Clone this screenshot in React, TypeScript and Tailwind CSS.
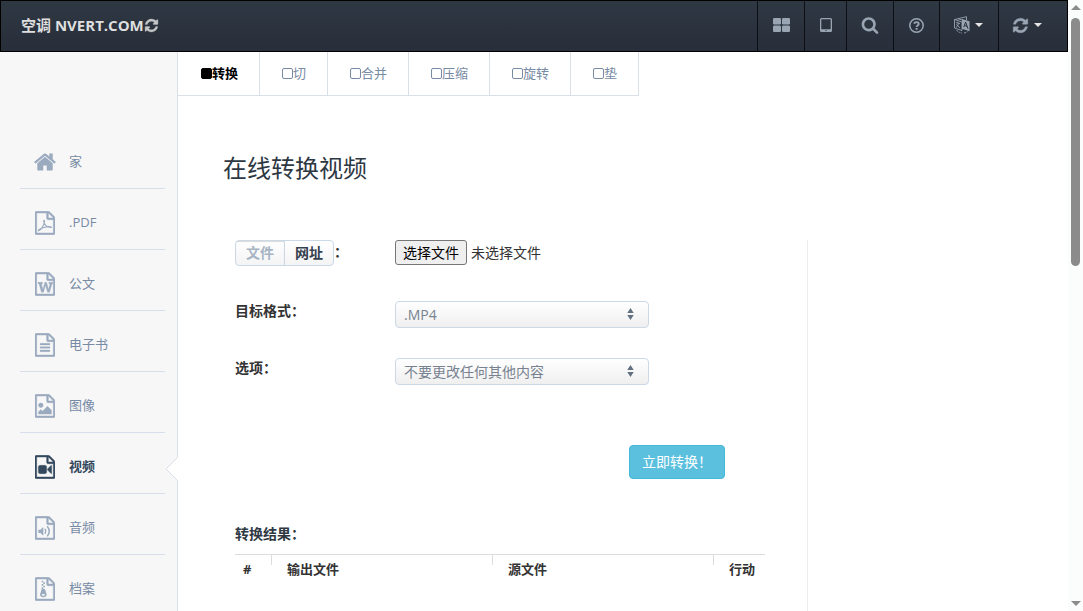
import type { ReactNode } from "react";

const FILE_OUTLINE =
  "M1468 380q28 28 48 76t20 88v1152q0 40-28 68t-68 28h-1344q-40 0-68-28t-28-68v-1600q0-40 28-68t68-28h896q40 0 88 20t76 48zm-444-244v376h376q-10-29-22-41l-313-313q-12-12-41-22zm384 1528v-1024h-416q-40 0-68-28t-28-68v-416h-768v1536h1280z";

const REFRESH =
  "M1639 1056q0 5-1 7-64 268-268 434.5t-478 166.5q-146 0-282.5-55t-243.5-157l-129 129q-19 19-45 19t-45-19-19-45v-448q0-26 19-45t45-19h448q26 0 45 19t19 45-19 45l-137 137q71 66 161 102t187 36q134 0 250-65t186-179q11-17 53-117 8-23 30-23h192q13 0 22.5 9.5t9.5 22.5zm25-800v448q0 26-19 45t-45 19h-448q-26 0-45-19t-19-45 19-45l138-138q-148-137-349-137-134 0-250 65t-186 179q-11 17-53 117-8 23-30 23h-199q-13 0-22.5-9.5t-9.5-22.5v-7q65-268 270-434.5t480-166.5q146 0 284 55.5t245 156.5l130-129q19-19 45-19t45 19 19 45z";

function FileIcon({ children }: { children: ReactNode }) {
  return (
    <svg viewBox="0 0 1536 1792" className="h-6 w-5" fill="currentColor" aria-hidden="true">
      <path d={FILE_OUTLINE} stroke="currentColor" strokeWidth="36" />
      {children}
    </svg>
  );
}

function RefreshIcon({ className }: { className: string }) {
  return (
    <svg viewBox="0 0 1792 1792" className={className} fill="currentColor" aria-hidden="true">
      <path d={REFRESH} stroke="currentColor" strokeWidth="40" />
    </svg>
  );
}

function HomeIcon() {
  return (
    <svg viewBox="0 0 1792 1792" className="h-6 w-6 shrink-0" fill="currentColor" aria-hidden="true">
      <path d="M1472 992v480q0 26-19 45t-45 19h-384v-384h-256v384h-384q-26 0-45-19t-19-45v-480q0-1 .5-3t.5-3l575-474 575 474q1 2 1 6zm223-69l-62 74q-8 9-21 11h-3q-13 0-21-7l-692-577-692 577q-12 8-24 7-13-2-21-11l-62-74q-8-10-7-23.5t11-21.5l719-599q32-26 76-26t76 26l244 204v-195q0-14 9-23t23-9h192q14 0 23 9t9 23v408l219 182q10 8 11 21.5t-7 23.5z" />
    </svg>
  );
}

function PdfIcon() {
  return (
    <FileIcon>
      <path
        d="M270 1495C460 1440 700 1090 730 760C735 660 660 660 665 760C690 1010 900 1260 1250 1245C1290 1200 1150 1160 960 1180C700 1210 480 1270 350 1370C250 1440 240 1500 270 1495Z"
        fill="none"
        stroke="currentColor"
        strokeWidth="85"
      />
    </FileIcon>
  );
}

function WordIcon() {
  return (
    <FileIcon>
      <path
        d="M233 768h350v107h-90l115 438 150-545h130l150 545 115-438h-90v-107h320v107h-75l-190 661h-155l-145-500-10-60-10 60-150 500h-155l-185-661h-75z"
        stroke="currentColor"
        strokeWidth="24"
      />
    </FileIcon>
  );
}

function BookIcon() {
  return (
    <FileIcon>
      <path
        d="M384 800q0-32 32-32h704q32 0 32 32v64q0 32-32 32h-704q-32 0-32-32zM384 1056q0-32 32-32h704q32 0 32 32v64q0 32-32 32h-704q-32 0-32-32zM384 1312q0-32 32-32h704q32 0 32 32v64q0 32-32 32h-704q-32 0-32-32z"
        stroke="currentColor"
        strokeWidth="24"
      />
    </FileIcon>
  );
}

function ImageIcon() {
  return (
    <FileIcon>
      <path d="M1280 1216v320h-1024v-192l192-192 128 128 384-384zM448 1024q-80 0-136-56t-56-136 56-136 136-56 136 56 56 136-56 136-136 56z" />
    </FileIcon>
  );
}

function VideoIcon() {
  return (
    <FileIcon>
      <path
        d="M768 768q52 0 90 38t38 90v384q0 52-38 90t-90 38h-384q-52 0-90-38t-38-90v-384q0-52 38-90t90-38zM1260 770q20 8 20 30v576q0 22-20 30-8 2-12 2-14 0-23-9l-265-266v-90l265-266q9-9 23-9 4 0 12 2z"
        stroke="currentColor"
        strokeWidth="24"
      />
    </FileIcon>
  );
}

function AudioIcon() {
  return (
    <FileIcon>
      <path d="M620 850q20 8 20 30v544q0 22-20 30-8 2-12 2-12 0-23-9l-166-167h-131q-14 0-23-9t-9-23v-192q0-14 9-23t23-9h131l166-167q16-15 35-7z" />
      <path d="M780 1000Q890 1150 780 1300M960 800Q1240 1150 960 1500" fill="none" stroke="currentColor" strokeWidth="110" strokeLinecap="round" />
    </FileIcon>
  );
}

function ArchiveIcon() {
  return (
    <FileIcon>
      <path d="M640 256v128h-128v-128zM768 384v128h-128v-128zM640 512v128h-128v-128zM768 640v128h-128v-128z" />
      <path
        fillRule="evenodd"
        d="M781 943l107 349q8 27 8 52 0 83-72.5 137.5t-183.5 54.5-183.5-54.5-72.5-137.5q0-25 8-52 21-63 120-396v-128h128v128h79q22 0 39 13t23 34zM640 1408q53 0 90.500-19t37.500-45-37.500-45-90.500-19-90.500 19-37.500 45 37.500 45 90.500 19z"
      />
    </FileIcon>
  );
}

function GridIcon() {
  return (
    <svg viewBox="0 0 17 14" className="h-[14px] w-[17px]" fill="currentColor" aria-hidden="true">
      <rect x="0" y="0" width="8" height="6.500" rx="1.200" />
      <rect x="9" y="0" width="8" height="6.500" rx="1.200" />
      <rect x="0" y="7.500" width="8" height="6.500" rx="1.200" />
      <rect x="9" y="7.500" width="8" height="6.500" rx="1.200" />
    </svg>
  );
}

function TabletIcon() {
  return (
    <svg viewBox="0 0 12 14" className="h-[14px] w-3" fill="currentColor" aria-hidden="true">
      <path
        fillRule="evenodd"
        d="M1.500 0h9A1.500 1.500 0 0 1 12 1.500v11a1.500 1.500 0 0 1-1.500 1.500h-9A1.500 1.500 0 0 1 0 12.500v-11A1.500 1.500 0 0 1 1.500 0zM1.300 1.300v10h9.400v-10zM6 12a.6.6 0 1 0 0 1.200.6.6 0 0 0 0-1.200z"
      />
    </svg>
  );
}

function SearchIcon() {
  return (
    <svg viewBox="0 0 1792 1792" className="h-[18px] w-[18px]" fill="currentColor" aria-hidden="true">
      <path d="M1216 832q0-185-131.5-316.5t-316.5-131.5-316.5 131.5-131.5 316.5 131.5 316.5 316.5 131.5 316.5-131.5 131.5-316.5zm512 832q0 52-38 90t-90 38q-54 0-90-38l-343-342q-179 124-399 124-143 0-273.5-55.5t-225-150-150-225-55.5-273.5 55.5-273.5 150-225 225-150 273.5-55.5 273.5 55.5 225 150 150 225 55.5 273.5q0 220-124 399l343 343q37 37 37 90z" />
    </svg>
  );
}

function HelpIcon() {
  return (
    <svg viewBox="0 0 15 15" className="h-[15px] w-[15px]" fill="none" stroke="currentColor" aria-hidden="true">
      <circle cx="7.500" cy="7.500" r="6.700" strokeWidth="1.500" />
      <path d="M5.200 5.700C5.600 3.600 9.700 3.500 9.700 6C9.700 7.500 7.600 7.400 7.600 9.100" strokeWidth="1.900" />
      <path d="M7.600 10v1.800" strokeWidth="2" />
    </svg>
  );
}

function LanguageIcon() {
  return (
    <svg viewBox="0 0 16 18" className="h-[18px] w-4" fill="none" stroke="currentColor" aria-hidden="true">
      <path d="M.5 3.500L8 6v8.500L.5 12zM.8 3.500L12.500.7v3.500M4 2.700L9.500 4.500" strokeWidth="0.900" />
      <path d="M8 3l7.500 2.200v10L8 12.700z" fill="currentColor" stroke="none" />
      <path d="M9.800 11.200l1.800-5.200 2.400 6.800M10.400 9.500l2.900.9" stroke="#2b333f" strokeWidth="1" />
      <path d="M2 6.500l4 1.200M4.700 7.300q-.5 2.700-2.700 4M2.500 8.300q1.200 2.200 3.500 3.400M4 5.700v1.200" strokeWidth="0.900" />
      <path d="M2.500 14q2 2.600 5.500 3M10 17q2.500-.3 3.500-1.500" strokeWidth="0.900" strokeDasharray="2 0.800" />
    </svg>
  );
}

function Caret() {
  return <span className="ml-[5px] h-0 w-0 border-x-4 border-t-4 border-x-transparent border-t-[#e6e6e6]" />;
}

function NavButton({ label, className, children }: { label: string; className: string; children: ReactNode }) {
  return (
    <button
      type="button"
      aria-label={label}
      className={`flex items-center justify-center border-l border-black/70 pb-0.5 text-[#9aa5b3] ${className}`}
    >
      {children}
    </button>
  );
}

function Header() {
  return (
    <header className="flex h-[52px] shrink-0 items-stretch border border-black bg-linear-to-b from-[#2e3843] to-[#282e3a]">
      <a href="#" className="flex items-center pb-0.5 pl-5 text-[15px] font-bold text-[#dfdfdf]">
        空调 NVERT.COM
        <RefreshIcon className="h-[15px] w-[15px] text-[#c4c6c8]" />
      </a>
      <nav className="ml-auto flex">
        <NavButton label="应用" className="w-[47px]"><GridIcon /></NavButton>
        <NavButton label="设备" className="w-[42px]"><TabletIcon /></NavButton>
        <NavButton label="搜索" className="w-[47px]"><SearchIcon /></NavButton>
        <NavButton label="帮助" className="w-[46px]"><HelpIcon /></NavButton>
        <NavButton label="语言" className="w-[59px] pr-0.5"><LanguageIcon /><Caret /></NavButton>
        <NavButton label="转换" className="w-[69px] pr-3"><RefreshIcon className="h-[17px] w-[17px]" /><Caret /></NavButton>
      </nav>
    </header>
  );
}

const sections = [
  { label: "家", icon: <HomeIcon />, active: false },
  { label: ".PDF", icon: <PdfIcon />, active: false },
  { label: "公文", icon: <WordIcon />, active: false },
  { label: "电子书", icon: <BookIcon />, active: false },
  { label: "图像", icon: <ImageIcon />, active: false },
  { label: "视频", icon: <VideoIcon />, active: true },
  { label: "音频", icon: <AudioIcon />, active: false },
  { label: "档案", icon: <ArchiveIcon />, active: false },
];

function Sidebar() {
  return (
    <aside className="w-[178px] shrink-0 border-r border-[#d9e0e7] bg-[#f7f7f7] pt-[76px]">
      <ul className="pr-3 pl-5">
        {sections.map((s) => (
          <li key={s.label} className="relative h-[61px] border-b border-[#d7dfea]">
            <a
              href="#"
              className={`flex h-full items-center pt-2 text-[13px] ${
                s.active ? "font-bold text-[#34495e]" : "text-[#778ba5]"
              }`}
            >
              <span className={`flex w-[49px] justify-center ${s.active ? "" : "text-[#9aaabf]"}`}>{s.icon}</span>
              {s.label}
            </a>
            {s.active && (
              <svg viewBox="0 0 13 24" className="absolute top-6 -right-[13px] h-6 w-[13px]" aria-hidden="true">
                <path d="M13 .5L12.500 .5L1 12L12.500 23.500H13Z" fill="#fff" />
                <path d="M12.500 .5L1 12L12.500 23.500" fill="none" stroke="#d9e0e7" />
              </svg>
            )}
          </li>
        ))}
      </ul>
    </aside>
  );
}

const tabs = [
  { label: "转换", active: true },
  { label: "切", active: false },
  { label: "合并", active: false },
  { label: "压缩", active: false },
  { label: "旋转", active: false },
  { label: "垫", active: false },
];

function Tabs() {
  return (
    <nav className="flex w-fit border-b border-[#d9e0e7] pl-px">
      {tabs.map((t) => (
        <a
          key={t.label}
          href="#"
          className={`flex h-[43px] items-center border-r border-[#d9e0e7] px-[21px] text-[13px] ${
            t.active ? "font-bold text-black" : "text-[#778ba5]"
          }`}
        >
          <svg viewBox="0 0 12 12" className="h-3 w-3" stroke="currentColor" aria-hidden="true">
            <rect x="1.500" y="0.500" width="10" height="10" rx="1.500" fill={t.active ? "currentColor" : "none"} />
          </svg>
          {t.label}
        </a>
      ))}
    </nav>
  );
}

function Select({ id, value }: { id: string; value: string }) {
  return (
    <div className="relative w-[254px]">
      <select
        id={id}
        className="block h-[27px] w-full appearance-none rounded border border-[#cbd9e6] bg-linear-to-b from-white to-[#efefef] px-2 text-[14px] text-[#788290]"
      >
        <option>{value}</option>
      </select>
      <svg viewBox="0 0 7 13" className="pointer-events-none absolute top-[7px] right-[15px] h-3 w-[7px] fill-[#637080]" aria-hidden="true">
        <path d="M3.500 0L7 5.500H0zM3.500 13L0 7.500H7z" />
      </svg>
    </div>
  );
}

function Converter() {
  return (
    <form className="mt-[54px] w-[585px] grow border-r border-[#ececec] pl-3 text-[14px] text-[#333]">
      <div className="flex h-[26px] items-start">
        <div className="flex w-40 items-start font-bold">
          <div className="flex h-[26px] overflow-hidden rounded border border-[#cbd9e6] bg-linear-to-b from-white to-[#f4f4f4]">
            <button type="button" className="w-12 pb-0.5 text-[#a6b4c4] shadow-[inset_0_1px_1px_rgba(0,0,0,0.15)]">文件</button>
            <button type="button" className="w-[49px] border-l border-[#cbd9e6] pb-0.5 text-[#34404d]">网址</button>
          </div>
          <span className="leading-6">：</span>
        </div>
        <label className="flex items-center gap-1">
          <input type="file" className="sr-only" />
          <span className="flex h-[25px] w-[72px] items-center justify-center rounded-[3px] border border-[#767676] bg-[#efefef] text-black">选择文件</span>
          <span>未选择文件</span>
        </label>
      </div>
      <div className="mt-[35px] flex h-[27px]">
        <label htmlFor="format" className="w-40 font-bold leading-5">目标格式：</label>
        <Select id="format" value=".MP4" />
      </div>
      <div className="mt-[30px] flex h-[27px]">
        <label htmlFor="options" className="w-40 font-bold leading-5">选项：</label>
        <Select id="options" value="不要更改任何其他内容" />
      </div>
      <div className="mt-[60px] flex justify-end pr-[82px]">
        <button type="button" className="h-[34px] rounded border border-[#46b8da] bg-[#5bc0de] px-3 pb-0.5 text-white">立即转换！</button>
      </div>
      <div className="mr-[42px]">
        <h2 className="mt-[45px] mb-[10px] font-bold leading-5 text-[#2e3843]">转换结果：</h2>
        <table className="w-full table-fixed border-t border-[#dddddd] text-left text-[13px]">
          <thead>
            <tr className="h-7">
              <HeadCell first label="#" className="w-9" textClass="pl-2" />
              <HeadCell label="输出文件" className="w-[221px]" textClass="pl-[15px]" />
              <HeadCell label="源文件" className="w-[221px]" textClass="pl-[15px]" />
              <HeadCell label="行动" className="w-[52px]" textClass="pl-[15px]" />
            </tr>
          </thead>
        </table>
      </div>
    </form>
  );
}

function HeadCell({ label, className, textClass, first = false }: { label: string; className: string; textClass: string; first?: boolean }) {
  return (
    <th className={className}>
      <div className="flex items-start">
        {!first && <span className="h-[10px] w-px bg-[#dddddd]" />}
        <span className={`whitespace-nowrap leading-7 ${textClass}`}>{label}</span>
      </div>
    </th>
  );
}

function Scrollbar() {
  return (
    <div className="flex w-[15px] shrink-0 flex-col items-center bg-[#fbfdfc] pt-[5px] pb-[5px]" aria-hidden="true">
      <div className="border-x-[5px] border-b-[5px] border-x-transparent border-b-[#8b8b8b]" />
      <div className="mt-2 h-[248px] w-[9px] shrink-0 rounded-full bg-[#8b8b8b]" />
      <div className="mt-auto border-x-[5px] border-t-[5px] border-x-transparent border-t-[#8b8b8b]" />
    </div>
  );
}

export default function App() {
  return (
    <div className="flex h-screen bg-white font-['Open_Sans','Noto_Sans_CJK_SC',sans-serif]" lang="zh-CN">
      <div className="flex min-w-0 grow flex-col overflow-hidden">
        <Header />
        <div className="flex min-h-0 grow">
          <Sidebar />
          <main className="flex min-w-0 grow flex-col">
            <Tabs />
            <section className="flex grow flex-col pt-[54px] pl-[45px]">
              <h1 className="text-2xl leading-9 text-[#2e3843]">在线转换视频</h1>
              <Converter />
            </section>
          </main>
        </div>
      </div>
      <Scrollbar />
    </div>
  );
}
